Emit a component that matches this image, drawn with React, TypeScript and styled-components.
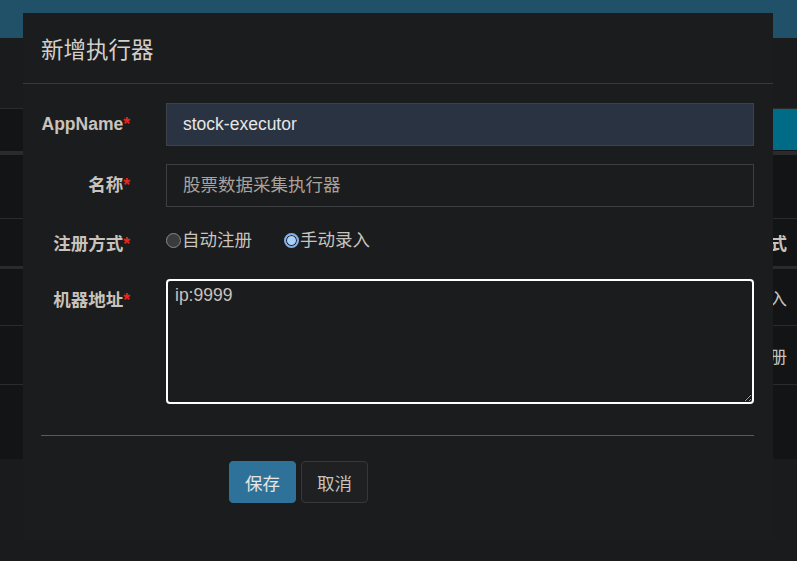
import styled, { createGlobalStyle } from "styled-components";

const GlobalStyle = createGlobalStyle`
  html, body {
    margin: 0;
    padding: 0;
    background: #1a1b1d;
  }

  body {
    font-family: "Liberation Sans", "Noto Sans CJK SC", sans-serif;
    font-size: 17.5px;
    color: #c8c3bc;
  }
`;

type BgRow = { height: number; text: string; bold?: boolean; line: number };

const bgRows: BgRow[] = [
  { height: 63, text: "", line: 1 },
  { height: 47, text: "注册方式", bold: true, line: 3 },
  { height: 56, text: "手动录入", line: 1 },
  { height: 58, text: "自动注册", line: 1 },
  { height: 74, text: "", line: 0 },
];

function App() {
  return (
    <>
      <GlobalStyle />
      <Styled.Page>
        <Styled.TopBar />
        <Styled.Spacer />
        <Styled.Toolbar>
          <Styled.AddButton />
        </Styled.Toolbar>
        <Styled.ThickLine />
        {bgRows.map((row, i) => (
          <Styled.TableRow key={i} $h={row.height} $line={row.line}>
            <Styled.Cell $bold={row.bold}>{row.text}</Styled.Cell>
          </Styled.TableRow>
        ))}
      </Styled.Page>

      <Styled.Modal>
        <Styled.Header>
          <Styled.Title>新增执行器</Styled.Title>
        </Styled.Header>

        <Styled.Body>
          <Styled.Form>
            <Styled.Label>
              AppName<Styled.Star>*</Styled.Star>
            </Styled.Label>
            <Styled.Input $filled type="text" defaultValue="stock-executor" />

            <Styled.Label>
              名称<Styled.Star>*</Styled.Star>
            </Styled.Label>
            <Styled.Input type="text" placeholder="股票数据采集执行器" />

            <Styled.Label $top={7}>
              注册方式<Styled.Star>*</Styled.Star>
            </Styled.Label>
            <Styled.RadioGroup>
              <Styled.RadioOption>
                <Styled.Radio />
                自动注册
              </Styled.RadioOption>
              <Styled.RadioOption>
                <Styled.Radio $checked />
                手动录入
              </Styled.RadioOption>
            </Styled.RadioGroup>

            <Styled.Label>
              机器地址<Styled.Star>*</Styled.Star>
            </Styled.Label>
            <Styled.TextArea defaultValue="ip:9999" />
          </Styled.Form>
        </Styled.Body>

        <Styled.Divider />

        <Styled.Footer>
          <Styled.Button $primary>保存</Styled.Button>
          <Styled.Button>取消</Styled.Button>
        </Styled.Footer>
      </Styled.Modal>
    </>
  );
}

export default App;

const Styled = {
  Page: styled.div`
    width: 797px;
    height: 561px;
    overflow: hidden;
    display: flex;
    flex-direction: column;
  `,

  TopBar: styled.div`
    height: 38px;
    flex-shrink: 0;
    background: #215069;
  `,

  Spacer: styled.div`
    height: 70px;
    flex-shrink: 0;
    border-bottom: 1px solid #2a2b2d;
  `,

  Toolbar: styled.div`
    height: 42px;
    flex-shrink: 0;
    display: flex;
    justify-content: flex-end;
    background: #131416;
  `,

  AddButton: styled.div`
    width: 110px;
    height: 41px;
    background: #006b86;
  `,

  ThickLine: styled.div`
    height: 4px;
    flex-shrink: 0;
    background: #2a2b2d;
  `,

  TableRow: styled.div<{ $h: number; $line: number }>`
    height: ${(p) => p.$h}px;
    flex-shrink: 0;
    display: flex;
    align-items: center;
    justify-content: flex-end;
    background: #131416;
    border-bottom: ${(p) => p.$line}px solid #2a2b2d;
  `,

  Cell: styled.span<{ $bold?: boolean }>`
    padding-right: 10px;
    font-weight: ${(p) => (p.$bold ? 700 : 400)};
    color: #c8c3bc;
  `,

  Modal: styled.div`
    position: absolute;
    left: 23px;
    top: 13px;
    width: 750px;
    height: 526px;
    background: #1b1c1e;
    display: flex;
    flex-direction: column;
  `,

  Header: styled.div`
    height: 70px;
    padding: 0 18px;
    display: flex;
    align-items: center;
    border-bottom: 1px solid #38393b;
  `,

  Title: styled.h4`
    margin: 0;
    font-size: 22.5px;
    font-weight: 400;
    color: #d3cfc9;
  `,

  Body: styled.div`
    padding: 19px 19px 31px 18px;
  `,

  Form: styled.div`
    display: grid;
    grid-template-columns: 89px 588px;
    column-gap: 36px;
    row-gap: 18px;
  `,

  Label: styled.label<{ $top?: number }>`
    padding-top: ${(p) => p.$top ?? 9}px;
    line-height: 24px;
    font-weight: 700;
    text-align: right;
    white-space: nowrap;
    color: #c8c3bc;
  `,

  Star: styled.span`
    color: #e8261f;
  `,

  Input: styled.input<{ $filled?: boolean }>`
    box-sizing: border-box;
    height: 43px;
    padding: 0 16px;
    border: 1px solid ${(p) => (p.$filled ? "#3e4248" : "#3d3f42")};
    background: ${(p) => (p.$filled ? "#2a3342" : "#1b1c1e")};
    font-family: inherit;
    font-size: 17.5px;
    color: #e8e6e3;
    outline: none;

    &::placeholder {
      color: #a9a39b;
    }
  `,

  RadioGroup: styled.div`
    height: 36px;
    padding-top: 3px;
    box-sizing: border-box;
    display: flex;
    align-items: flex-start;
    gap: 32px;
  `,

  RadioOption: styled.label`
    display: flex;
    align-items: center;
    gap: 1px;
    line-height: 24px;
    color: #c8c3bc;
  `,

  Radio: styled.span<{ $checked?: boolean }>`
    box-sizing: border-box;
    width: 15px;
    height: 15px;
    border-radius: 50%;
    border: ${(p) => (p.$checked ? "2px solid #7fb2ea" : "1px solid #8a8a8a")};
    background: ${(p) => (p.$checked ? "#a9d0fb" : "#3b3b3b")};
    box-shadow: ${(p) => (p.$checked ? "inset 0 0 0 1px #1b1c1e" : "none")};
  `,

  TextArea: styled.textarea`
    box-sizing: border-box;
    height: 125px;
    padding: 2px 7px;
    border: 2px solid #ffffff;
    border-radius: 4px;
    background: #1b1c1e;
    font-family: inherit;
    font-size: 17.5px;
    line-height: 24px;
    color: #c8c3bc;
    outline: none;
    resize: vertical;
  `,

  Divider: styled.div`
    height: 1px;
    margin: 0 19px 0 18px;
    background: #5d5955;
  `,

  Footer: styled.div`
    padding: 25px 0 0 206px;
    display: flex;
    gap: 5px;
  `,

  Button: styled.button<{ $primary?: boolean }>`
    width: 67px;
    height: 42px;
    border-radius: 4px;
    border: 1px solid ${(p) => (p.$primary ? "#2f7299" : "#36393c")};
    background: ${(p) => (p.$primary ? "#2f7299" : "#1e2022")};
    font-family: inherit;
    font-size: 17.5px;
    color: ${(p) => (p.$primary ? "#e8e6e3" : "#c8c3bc")};

    &:hover {
      cursor: pointer;
    }
  `,
};
